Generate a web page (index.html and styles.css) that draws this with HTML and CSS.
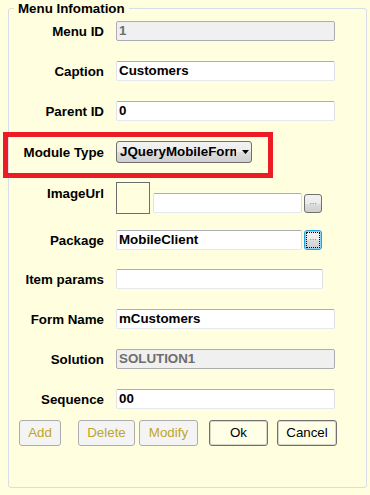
FILE: index.html
```html
<!DOCTYPE html>
<html>
<head>
<meta charset="utf-8">
<link rel="stylesheet" href="styles.css">
</head>
<body>
<fieldset class="group">
  <legend class="legend">Menu Infomation</legend>
  <div class="form">
    <div class="row h40"><div class="lbl">Menu ID</div><div class="tb disabled w219">1</div></div>
    <div class="row h40"><div class="lbl">Caption</div><div class="tb w219">Customers</div></div>
    <div class="row h40"><div class="lbl">Parent ID</div><div class="tb w219">0</div></div>
    <div class="row h41"><div class="lbl tall">Module Type</div>
      <div class="combo"><span class="combo-text">JQueryMobileForm</span>
        <svg class="arrow" width="7" height="4" viewBox="0 0 7 4"><path d="M0 0H7L3.5 4Z" fill="#000"/></svg>
      </div>
    </div>
    <div class="row h48"><div class="lbl img-lbl">ImageUrl</div>
      <div class="picbox"></div>
      <div class="tb w149 img-tb"></div>
      <div class="dots img-btn">...</div>
    </div>
    <div class="row h39"><div class="lbl">Package</div>
      <div class="tb w186">MobileClient</div>
      <div class="dots focused">...</div>
    </div>
    <div class="row h40"><div class="lbl">Item params</div><div class="tb w207"></div></div>
    <div class="row h40"><div class="lbl">Form Name</div><div class="tb w219">mCustomers</div></div>
    <div class="row h40"><div class="lbl">Solution</div><div class="tb disabled w219">SOLUTION1</div></div>
    <div class="row h31"><div class="lbl">Sequence</div><div class="tb w219">00</div></div>
  </div>
  <div class="buttons">
    <div class="btn off b-add">Add</div>
    <div class="btn off b-del">Delete</div>
    <div class="btn off b-mod">Modify</div>
    <div class="btn on b-ok">Ok</div>
    <div class="btn on b-cancel">Cancel</div>
  </div>
</fieldset>
<div class="highlight"></div>
</body>
</html>
```
FILE: styles.css
```css
html, body {
  margin: 0;
  padding: 0;
  background: #FFFFE0;
}
body {
  position: relative;
  width: 370px;
  height: 495px;
  font-family: "Liberation Sans", Arial, sans-serif;
  font-size: 13.33px;
  color: #000;
  overflow: hidden;
}
.group {
  margin: 1px 3px 0 8px;
  padding: 0 0 41px 0;
  border: 1px solid #D5DFE5;
  border-radius: 3px;
  min-width: 0;
}
.legend {
  margin-left: 5px;
  padding: 0 4px;
  font-weight: bold;
  line-height: 15px;
}
.form {
  padding-top: 5px;
  display: flex;
  flex-direction: column;
}
.row {
  display: flex;
  align-items: flex-start;
}
.h31 { height: 31px; }
.h39 { height: 39px; }
.h40 { height: 40px; }
.h41 { height: 41px; }
.h48 { height: 48px; }
.lbl {
  width: 95px;
  margin-right: 12px;
  text-align: right;
  font-weight: bold;
  line-height: 20px;
  padding-top: 1px;
  white-space: nowrap;
}
.lbl.tall { line-height: 22px; }
.lbl.img-lbl { padding-top: 2px; }
.tb {
  box-sizing: border-box;
  height: 20px;
  background: #fff;
  border: 1px solid;
  border-color: #ABADB3 #DBDFE6 #E3E9EF #E2E3EA;
  border-radius: 2px;
  padding: 0 2px;
  line-height: 18px;
  font-weight: bold;
  white-space: nowrap;
  overflow: hidden;
}
.tb.disabled {
  background: #F0F0F0;
  border-color: #ABADB3;
  color: #6D6D6D;
}
.w219 { width: 219px; }
.w207 { width: 207px; }
.w186 { width: 186px; }
.w149 { width: 149px; }
.combo {
  box-sizing: border-box;
  width: 136px;
  height: 22px;
  border: 1px solid #707070;
  border-radius: 3px;
  background: linear-gradient(#F2F2F2 0%, #EBEBEB 50%, #DDDDDD 50%, #CFCFCF 100%);
  display: flex;
  align-items: center;
  padding-left: 3px;
}
.combo-text {
  width: 116px;
  flex: none;
  overflow: hidden;
  white-space: nowrap;
  font-weight: bold;
  line-height: 20px;
}
.arrow {
  margin-left: 6px;
  flex: none;
}
.picbox {
  box-sizing: border-box;
  width: 34px;
  height: 32px;
  border: 1px solid #6D6D6D;
  margin-right: 3px;
}
.img-tb { margin-top: 11px; }
.dots {
  box-sizing: border-box;
  width: 18px;
  height: 20px;
  margin-left: 2px;
  border: 1px solid #707070;
  border-radius: 3px;
  background: linear-gradient(#F2F2F2 0%, #EBEBEB 50%, #DDDDDD 50%, #CFCFCF 100%);
  color: #2E8BD9;
  font-size: 9px;
  line-height: 12px;
  text-align: center;
  letter-spacing: 0;
}
.img-btn { margin-top: 12px; height: 19px; }
.dots.focused {
  border-color: #26A0DA;
  box-shadow: inset 0 0 0 1px #8CD4F5;
  outline: 1px dotted #000;
  outline-offset: -3px;
}
.buttons {
  display: flex;
  padding-left: 10px;
}
.btn {
  box-sizing: border-box;
  height: 26px;
  border-radius: 3px;
  display: flex;
  align-items: center;
  justify-content: center;
  line-height: 24px;
}
.btn.off {
  background: #F4F4F4;
  border: 1px solid #ADADAD;
  color: #BEA628;
}
.btn.on {
  background: #FFFFE8;
  border: 1px solid #707070;
  box-shadow: inset 0 0 0 1px #D8D8C8;
  color: #000;
}
.b-add { width: 42px; }
.b-del { width: 57px; margin-left: 17px; }
.b-mod { width: 59px; margin-left: 4px; }
.b-ok { width: 59px; margin-left: 11px; }
.b-cancel { width: 60px; margin-left: 9px; }
.highlight {
  position: absolute;
  left: 3px;
  top: 132px;
  width: 270px;
  height: 46px;
  box-sizing: border-box;
  border: 5px solid #ED1C24;
  pointer-events: none;
}
```
